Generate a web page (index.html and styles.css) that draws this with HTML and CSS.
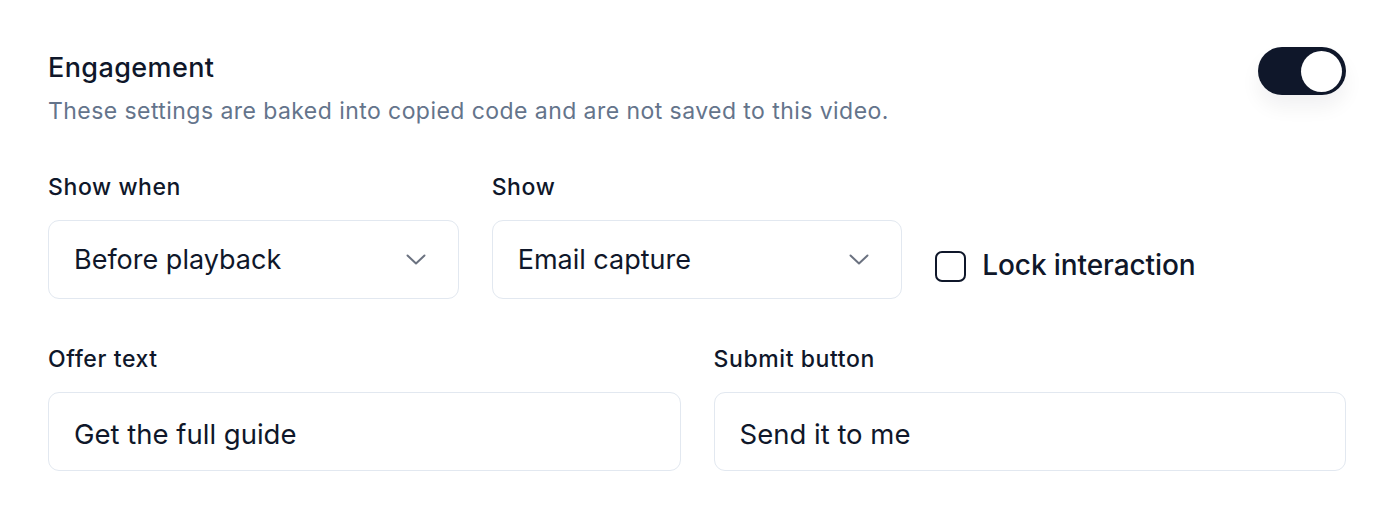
FILE: index.html
```html
<!DOCTYPE html>
<html lang="en">
<head>
<meta charset="utf-8">
<title>Engagement</title>
<link rel="stylesheet" href="styles.css">
</head>
<body>
<section class="panel">
  <header class="head">
    <div class="head-text">
      <h2 class="title">Engagement</h2>
      <p class="subtitle">These settings are baked into copied code and are not saved to this video.</p>
    </div>
    <button class="toggle" type="button" aria-pressed="true"><span class="knob"></span></button>
  </header>

  <div class="row row-3">
    <div class="field">
      <div class="label">Show when</div>
      <div class="control select">
        <span>Before playback</span>
        <svg class="chev" width="20" height="12" viewBox="0 0 20 12"><path d="M1.5 1.5 L10 9.5 L18.5 1.5" fill="none" stroke="#6b7280" stroke-width="2" stroke-linecap="round" stroke-linejoin="round"/></svg>
      </div>
    </div>
    <div class="field">
      <div class="label">Show</div>
      <div class="control select">
        <span>Email capture</span>
        <svg class="chev" width="20" height="12" viewBox="0 0 20 12"><path d="M1.5 1.5 L10 9.5 L18.5 1.5" fill="none" stroke="#6b7280" stroke-width="2" stroke-linecap="round" stroke-linejoin="round"/></svg>
      </div>
    </div>
    <label class="lock">
      <span class="checkbox"></span>
      <span class="lock-text">Lock interaction</span>
    </label>
  </div>

  <div class="row row-2">
    <div class="field">
      <div class="label">Offer text</div>
      <div class="control input"><span>Get the full guide</span></div>
    </div>
    <div class="field">
      <div class="label">Submit button</div>
      <div class="control input"><span>Send it to me</span></div>
    </div>
  </div>
</section>
</body>
</html>
```

FILE: styles.css
```css
* { box-sizing: border-box; }
html, body { margin: 0; padding: 0; background: #ffffff; }
body {
  font-family: Inter, "Noto Sans", "Liberation Sans", sans-serif;
  color: #0f172a;
}
.panel {
  padding: 47px 50px 0 48px;
}
.head {
  display: flex;
  justify-content: space-between;
  align-items: flex-start;
}
.head-text { padding-top: 3px; }
.title {
  margin: 0 0 9px;
  font-size: 27px;
  line-height: 36px;
  font-weight: 550;
  letter-spacing: 0.4px;
  color: #0f172a;
}
.subtitle {
  margin: 0;
  font-size: 23px;
  line-height: 32px;
  color: #64748b;
  letter-spacing: 0.44px;
}
.toggle {
  width: 88px;
  height: 48px;
  border: 0;
  padding: 0 4px;
  border-radius: 24px;
  background: #0f172a;
  display: flex;
  align-items: center;
  justify-content: flex-end;
  box-shadow: 0 12px 20px rgba(15, 23, 42, 0.06);
  cursor: pointer;
}
.knob {
  width: 41px;
  height: 41px;
  border-radius: 50%;
  background: #ffffff;
}
.row {
  display: grid;
  column-gap: 33px;
}
.row-3 {
  grid-template-columns: 1fr 1fr 1fr;
  margin-top: 44px;
}
.row-2 {
  grid-template-columns: 1fr 1fr;
  margin-top: 44px;
}
.field { display: flex; flex-direction: column; }
.label {
  font-size: 23px;
  line-height: 32px;
  font-weight: 500;
  letter-spacing: 0.6px;
  color: #0f172a;
  margin-bottom: 17px;
}
.control {
  height: 79px;
  border: 1.5px solid #e2e8f0;
  border-radius: 11px;
  display: flex;
  align-items: center;
  padding: 0 25px;
  font-size: 27px;
  color: #0f172a;
}
.input {
  font-size: 27.5px;
  padding-top: 5px;
}
.select { justify-content: space-between; padding-right: 32px; }
.chev { display: block; }
.lock {
  align-self: end;
  display: flex;
  align-items: center;
  gap: 16px;
  padding-bottom: 16px;
  cursor: pointer;
}
.checkbox {
  width: 31px;
  height: 31px;
  border: 2.5px solid #0f172a;
  border-radius: 7px;
  margin-top: 3px;
  flex: none;
}
.lock-text {
  font-size: 28px;
  line-height: 36px;
  font-weight: 500;
  letter-spacing: -0.1px;
  color: #0f172a;
}
```
